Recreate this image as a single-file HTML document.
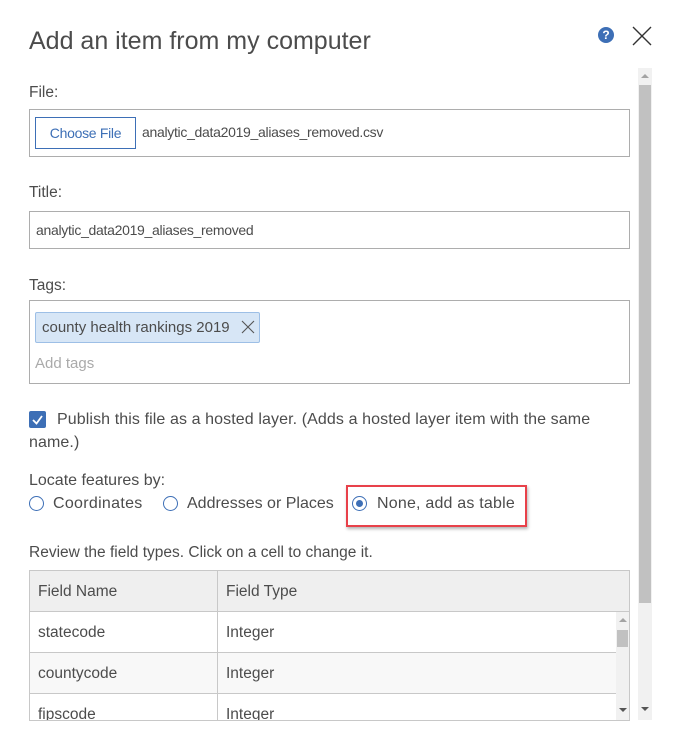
<!DOCTYPE html>
<html><head><meta charset="utf-8"><style>
*{box-sizing:border-box;margin:0;padding:0}
body{width:675px;height:744px;background:#fff;font-family:"Liberation Sans",sans-serif;color:#4c4c4c;position:relative;overflow:hidden}
.a{position:absolute;white-space:nowrap}
.t{font-size:14px;letter-spacing:-0.3px}
.box{position:absolute;border:1px solid #adadad;background:#fff}
.radio{position:absolute;width:15px;height:15px;border:1.5px solid #3d6fb6;border-radius:50%;background:#fff}
.r{position:absolute;left:0;width:587px;height:41px;border-bottom:1px solid #c8c8c8}
.c1{position:absolute;left:8px;top:12px;font-size:15.5px}
.c2{position:absolute;left:196px;top:12px;font-size:15.5px}
</style></head><body>
<div class="a" style="left:29px;top:27px;font-size:25px;color:#4c4c4c;letter-spacing:0px">Add an item from my computer</div>
<div class="a" style="left:598px;top:27px;width:16px;height:16px;border-radius:50%;background:#3d6fb6;color:#fff;font-size:12px;font-weight:bold;text-align:center;line-height:16px">?</div>
<svg class="a" style="left:632px;top:26px" width="20" height="20"><path d="M1 1L19 19M19 1L1 19" stroke="#333" stroke-width="1.4"/></svg>

<div class="a" style="left:638px;top:68px;width:14px;height:652px;background:#f1f1f1"></div>
<div class="a" style="left:639px;top:85px;width:12px;height:518px;background:#c1c1c1"></div>
<svg class="a" style="left:641px;top:73px" width="8" height="6"><path d="M0 5L4 1L8 5Z" fill="#a3a3a3"/></svg>
<svg class="a" style="left:641px;top:706px" width="8" height="6"><path d="M0 1L4 5L8 1Z" fill="#555"/></svg>

<div class="a" style="left:29px;top:84px;font-size:15.5px">File:</div>
<div class="box" style="left:29px;top:109px;width:601px;height:48px"></div>
<div class="a" style="left:35px;top:117px;width:101px;height:32px;border:1px solid #3d6fb6;color:#3d6fb6;font-size:14px;text-align:center;line-height:30px;letter-spacing:-0.3px">Choose File</div>
<div class="a t" style="left:142px;top:124px">analytic_data2019_aliases_removed.csv</div>

<div class="a" style="left:29px;top:184px;font-size:15.5px">Title:</div>
<div class="box" style="left:29px;top:211px;width:601px;height:38px"></div>
<div class="a t" style="left:36px;top:222px">analytic_data2019_aliases_removed</div>

<div class="a" style="left:29px;top:277px;font-size:15.5px">Tags:</div>
<div class="box" style="left:29px;top:300px;width:601px;height:84px"></div>
<div class="a" style="left:35px;top:312px;width:225px;height:31px;background:#d7e6f6;border:1px solid #9dbfe6;border-radius:2px"></div>
<div class="a" style="left:42px;top:319px;font-size:15px">county health rankings 2019</div>
<svg class="a" style="left:241px;top:320px" width="14" height="14"><path d="M1 1L13 13M13 1L1 13" stroke="#555" stroke-width="1.1"/></svg>
<div class="a" style="left:35px;top:355px;color:#aaa;font-size:15px">Add tags</div>

<div class="a" style="left:29px;top:411px;width:17px;height:17px;background:#3d6fb6;border-radius:2px"></div>
<svg class="a" style="left:29px;top:411px" width="17" height="17"><path d="M4 9L7.5 12.5L13 5" stroke="#fff" stroke-width="1.8" fill="none"/></svg>
<div class="a" style="left:57px;top:411px;font-size:16px;letter-spacing:0.1px">Publish this file as a hosted layer. (Adds a hosted layer item with the same</div>
<div class="a" style="left:29px;top:434px;font-size:16px;letter-spacing:0.1px">name.)</div>

<div class="a" style="left:29px;top:472px;font-size:16px">Locate features by:</div>
<div class="radio" style="left:29px;top:496px"></div>
<div class="a" style="left:53px;top:495px;font-size:16px;letter-spacing:0.3px">Coordinates</div>
<div class="radio" style="left:163px;top:496px"></div>
<div class="a" style="left:187px;top:495px;font-size:16px;letter-spacing:0px">Addresses or Places</div>
<div class="radio" style="left:352px;top:496px"></div>
<div class="a" style="left:356px;top:500px;width:7px;height:7px;border-radius:50%;background:#3d6fb6"></div>
<div class="a" style="left:377px;top:495px;font-size:16px;letter-spacing:0.2px">None, add as table</div>
<div class="a" style="left:346px;top:485px;width:181px;height:42px;border:2px solid #e8414a;box-shadow:1px 2px 3px rgba(0,0,0,0.3)"></div>

<div class="a" style="left:29px;top:544px;font-size:15.5px;letter-spacing:0px">Review the field types. Click on a cell to change it.</div>

<div class="a" style="left:29px;top:570px;width:601px;height:151px;border:1px solid #c8c8c8;overflow:hidden">
 <div class="r" style="top:0;width:600px;background:#efefef"></div>
 <div class="r" style="top:41px;background:#fff"></div>
 <div class="r" style="top:82px;background:#f8f8f8"></div>
 <div class="r" style="top:123px;background:#fff;border-bottom:none"></div>
 <div class="a" style="left:187px;top:0;width:1px;height:151px;background:#c8c8c8"></div>
 <div class="c1">Field Name</div><div class="c2">Field Type</div>
 <div class="c1" style="top:53px">statecode</div><div class="c2" style="top:53px">Integer</div>
 <div class="c1" style="top:94px">countycode</div><div class="c2" style="top:94px">Integer</div>
 <div class="c1" style="top:135px">fipscode</div><div class="c2" style="top:135px">Integer</div>
 <div class="a" style="left:586px;top:41px;width:14px;height:110px;background:#f1f1f1"></div>
 <div class="a" style="left:587px;top:59px;width:11px;height:17px;background:#c1c1c1"></div>
 <svg class="a" style="left:589px;top:46px" width="8" height="6"><path d="M0 5L4 1L8 5Z" fill="#a3a3a3"/></svg>
 <svg class="a" style="left:589px;top:136px" width="8" height="6"><path d="M0 1L4 5L8 1Z" fill="#555"/></svg>
</div>
</body></html>
